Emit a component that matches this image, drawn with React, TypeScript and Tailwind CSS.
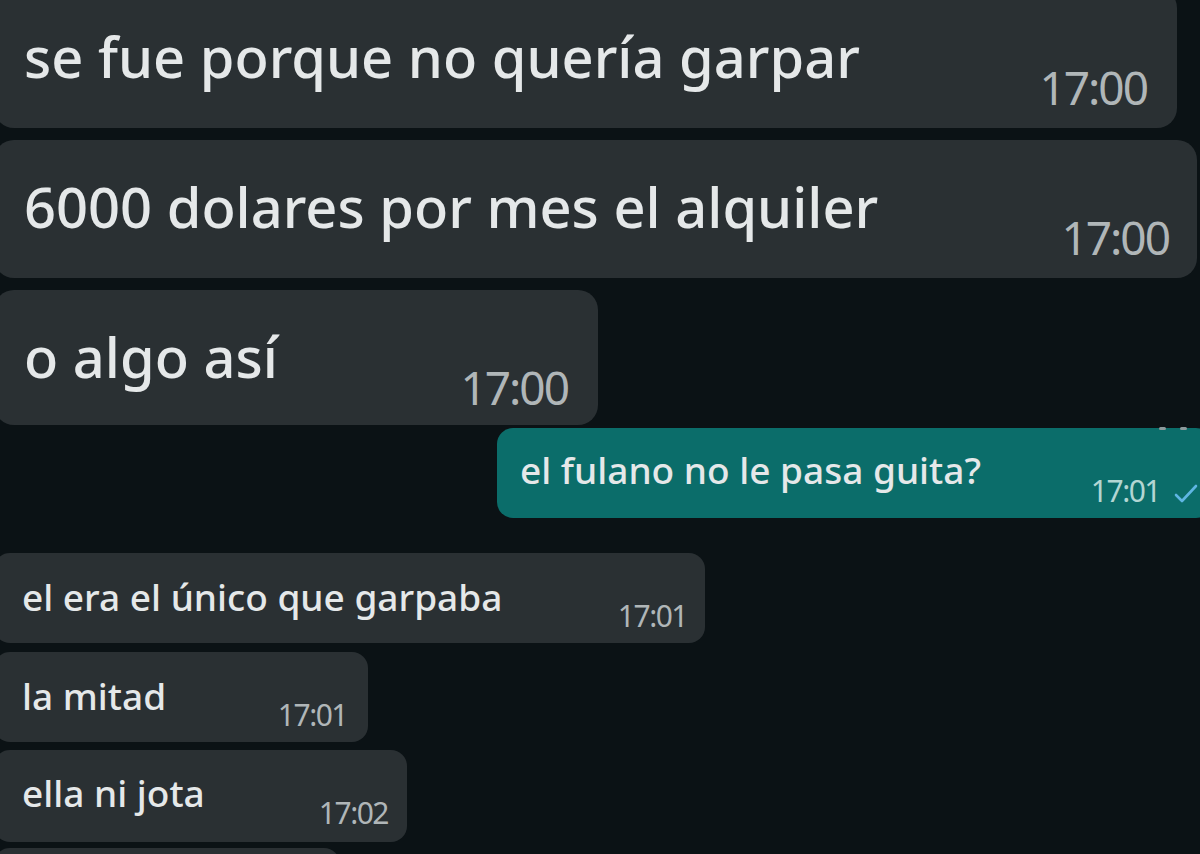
type Msg = {
  text: string;
  time: string;
  out?: boolean;
  box: string;
  textCls: string;
  timeCls: string;
};

const messages: Msg[] = [
  {
    text: "se fue porque no quería garpar",
    time: "17:00",
    box: "-mt-[12px] -ml-[6px] w-[1183px] h-[140px] pl-[30px] pr-[30px] pb-[18px] rounded-[20px]",
    textCls: "text-[56px] mb-[26px]",
    timeCls: "text-[46px] tracking-[-2px]",
  },
  {
    text: "6000 dolares por mes el alquiler",
    time: "17:00",
    box: "mt-[12px] -ml-[6px] w-[1203px] h-[138px] pl-[30px] pr-[28px] pb-[18px] rounded-[20px]",
    textCls: "text-[56px] mb-[26px]",
    timeCls: "text-[46px] tracking-[-2px]",
  },
  {
    text: "o algo así",
    time: "17:00",
    box: "mt-[12px] -ml-[6px] w-[604px] h-[135px] pl-[30px] pr-[30px] pb-[15px] rounded-[20px]",
    textCls: "text-[56px] mb-[26px]",
    timeCls: "text-[46px] tracking-[-2px]",
  },
  {
    text: "el fulano no le pasa guita?",
    time: "17:01",
    out: true,
    box: "mt-[3px] ml-[497px] w-[715px] h-[90px] pl-[23px] pr-[12px] pb-[12px] rounded-[16px]",
    textCls: "text-[37px] mb-[18px]",
    timeCls: "text-[30px] tracking-[-1.5px]",
  },
  {
    text: "el era el único que garpaba",
    time: "17:01",
    box: "mt-[35px] -ml-[6px] w-[711px] h-[90px] pl-[28px] pr-[18px] pb-[12px] rounded-[16px]",
    textCls: "text-[37px] mb-[16px]",
    timeCls: "text-[30px] tracking-[-1.5px]",
  },
  {
    text: "la mitad",
    time: "17:01",
    box: "mt-[9px] -ml-[6px] w-[374px] h-[90px] pl-[28px] pr-[21px] pb-[12px] rounded-[16px]",
    textCls: "text-[37px] mb-[16px]",
    timeCls: "text-[30px] tracking-[-1.5px]",
  },
  {
    text: "ella ni jota",
    time: "17:02",
    box: "mt-[8px] -ml-[6px] w-[413px] h-[92px] pl-[28px] pr-[19px] pb-[14px] rounded-[16px]",
    textCls: "text-[37px] mb-[17px]",
    timeCls: "text-[30px] tracking-[-1.5px]",
  },
];

function Check() {
  return (
    <svg width="26" height="22" viewBox="0 0 26 22" className="ml-[14px] mb-[2px] shrink-0">
      <path d="M2 13 L8 19 L22 4" fill="none" stroke="#5fb6e3" strokeWidth="2.6" strokeLinecap="round" strokeLinejoin="round" />
    </svg>
  );
}

function Bubble({ m }: { m: Msg }) {
  return (
    <div
      className={`${m.box} relative shrink-0 flex items-end ${
        m.out ? "bg-[#0b6d6a]" : "bg-[#2a3033]"
      }`}
    >
      {m.out && (
        <div className="absolute -top-[1px] right-[4px] flex gap-[14px]">
          <span className="w-[7px] h-[3px] rounded-full bg-[#8c9a9c]" />
          <span className="w-[7px] h-[3px] rounded-full bg-[#8c9a9c]" />
          <span className="w-[7px] h-[3px] rounded-full bg-[#8c9a9c]" />
        </div>
      )}
      <span className={`${m.textCls} font-medium leading-none text-[#e5e8e9] whitespace-nowrap`}>
        {m.text}
      </span>
      <span
        className={`ml-auto flex items-end ${m.timeCls} leading-none ${
          m.out ? "text-[#b3d6d3]" : "text-[#b0b6b8]"
        }`}
      >
        {m.time}
        {m.out && <Check />}
      </span>
    </div>
  );
}

export default function App() {
  return (
    <div
      className="w-[1200px] h-[854px] overflow-hidden bg-[#0b1215] flex flex-col"
      style={{ fontFamily: '"Noto Sans", "Open Sans", sans-serif' }}
    >
      {messages.map((m, i) => (
        <Bubble key={i} m={m} />
      ))}
      <div className="mt-[6px] -ml-[6px] w-[346px] h-[60px] shrink-0 rounded-[16px] bg-[#2a3033]" />
    </div>
  );
}
